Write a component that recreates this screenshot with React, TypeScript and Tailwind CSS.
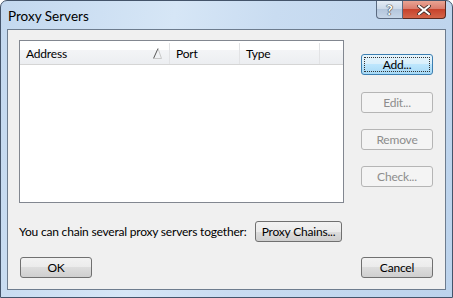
import React from "react";

const font = { fontFamily: 'Lato, "Noto Sans", "Liberation Sans", sans-serif' };

function Btn({
  label,
  kind = "normal",
  className = "",
}: {
  label: string;
  kind?: "normal" | "disabled" | "default";
  className?: string;
}) {
  if (kind === "disabled") {
    return (
      <div
        className={`flex shrink-0 items-center justify-center whitespace-nowrap rounded-[3px] border border-[#b5b5b5] bg-[#f4f4f4] text-[#8d8d8d] ${className}`}
      >
        {label}
      </div>
    );
  }
  if (kind === "default") {
    return (
      <div
        className={`shrink-0 rounded-[3px] border border-[#3c7fb1] bg-[linear-gradient(#e5f4fc_0%,#d9effb_50%,#bde6fd_50%,#a7d9f5_100%)] p-[2px] ${className}`}
      >
        <div className="flex h-full items-center justify-center whitespace-nowrap border border-dotted border-[#333] text-black">
          {label}
        </div>
      </div>
    );
  }
  return (
    <div
      className={`flex shrink-0 items-center justify-center whitespace-nowrap rounded-[3px] border border-[#707070] bg-[linear-gradient(#f2f2f2_0%,#ebebeb_50%,#dddddd_50%,#cfcfcf_100%)] text-black ${className}`}
    >
      {label}
    </div>
  );
}

export default function App() {
  return (
    <div
      style={font}
      className="flex h-[298px] w-[453px] flex-col overflow-hidden rounded-t-[7px] border border-[#44546a] bg-[linear-gradient(100deg,#c3d8ef_0%,#d6e6f6_35%,#c9dcf1_55%,#bcd3ec_100%)]"
    >
      {/* title bar */}
      <div className="flex h-[28px] shrink-0 items-start">
        <div className="pl-[7px] pt-[5px] text-[13.5px] text-black">Proxy Servers</div>
        <div className="ml-auto mr-[6px] flex">
          <div className="flex h-[18px] w-[27px] items-center justify-center rounded-bl-[4px] border border-t-0 border-[#5a6a80] bg-[linear-gradient(#e4ecf5_0%,#cad8e8_50%,#b4c6dc_50%,#c6d6e8_100%)] text-[14px] font-bold text-white [text-shadow:0_0_1px_#333,0_0_1px_#333,0_0_1px_#333]">
            ?
          </div>
          <div className="flex h-[18px] w-[43px] items-center justify-center rounded-br-[4px] border border-l-0 border-t-0 border-[#5a2a20] bg-[linear-gradient(#e9a493_0%,#d9796a_50%,#c7432c_50%,#d3654a_100%)]">
            <svg width="14" height="10" viewBox="0 0 14 10">
              <path
                d="M2 1 L12 9 M12 1 L2 9"
                stroke="#3a2a26"
                strokeWidth="3.6"
                strokeLinecap="square"
              />
              <path
                d="M2 1 L12 9 M12 1 L2 9"
                stroke="#ffffff"
                strokeWidth="2"
                strokeLinecap="square"
              />
            </svg>
          </div>
        </div>
      </div>

      {/* client area */}
      <div className="mx-[6px] mb-[7px] flex flex-1 flex-col border border-[#6d7c8e] bg-[#f0f0f0] text-[12px] tracking-[-0.2px] text-black">
        <div className="flex pl-[11px] pt-[10px]">
          {/* list view */}
          <div className="flex h-[163px] w-[325px] shrink-0 flex-col border border-[#828790] bg-white">
            <div className="flex h-[24px] border-b border-[#d5d5d5] bg-[linear-gradient(#ffffff_0%,#ffffff_40%,#f3f4f6_41%,#eceef1_100%)] pt-[2px]">
              <div className="relative flex w-[150px] items-center border-r border-[#e2e3e5] pl-[6px]">
                Address
                <svg
                  className="absolute right-[7px] top-[5px]"
                  width="9"
                  height="11"
                  viewBox="0 0 9 11"
                >
                  <path d="M0.5 10.5 L5 0.5" stroke="#555" strokeWidth="1" />
                  <path d="M5 0.5 L8.5 10.5 L0.5 10.5" stroke="#c9c9c9" fill="none" strokeWidth="1" />
                </svg>
              </div>
              <div className="flex w-[70px] items-center border-r border-[#e2e3e5] pl-[6px]">Port</div>
              <div className="flex w-[80px] items-center border-r border-[#e2e3e5] pl-[6px]">Type</div>
              <div className="flex-1" />
            </div>
          </div>

          {/* side buttons */}
          <div className="ml-[17px] flex flex-col pt-[14px]">
            <Btn label="Add..." kind="default" className="h-[21px] w-[72px]" />
            <Btn label="Edit..." kind="disabled" className="mt-[17px] h-[21px] w-[72px]" />
            <Btn label="Remove" kind="disabled" className="mt-[16px] h-[21px] w-[72px]" />
            <Btn label="Check..." kind="disabled" className="mt-[16px] h-[21px] w-[72px]" />
          </div>
        </div>

        <div className="mt-[18px] flex items-center pl-[11px]">
          <span className="w-[236px] shrink-0 whitespace-nowrap pt-[1px]">You can chain several proxy servers together:</span>
          <Btn label="Proxy Chains..." className="h-[21px] w-[87px]" />
        </div>

        <div className="mt-[15px] flex px-[12px]">
          <Btn label="OK" className="h-[21px] w-[72px]" />
          <Btn label="Cancel" className="ml-auto h-[21px] w-[72px]" />
        </div>
      </div>
    </div>
  );
}
